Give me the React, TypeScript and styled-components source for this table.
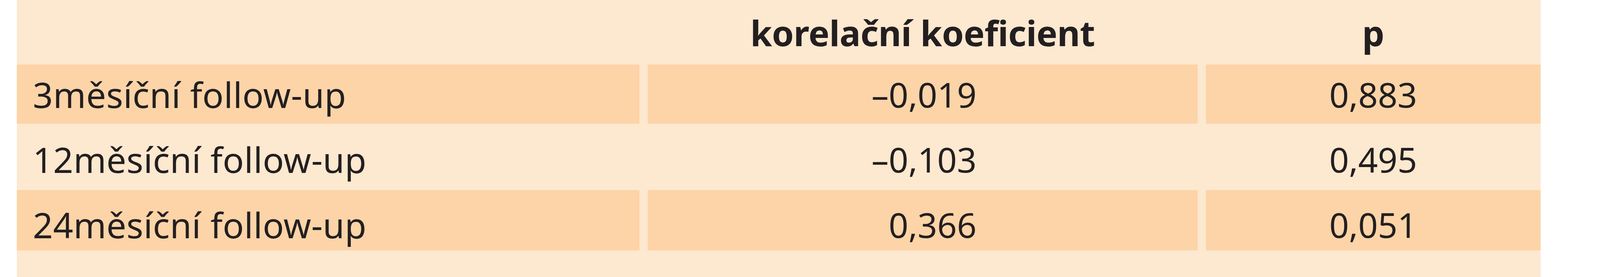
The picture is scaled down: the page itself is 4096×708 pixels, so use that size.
import React from 'react'
import styled, { createGlobalStyle } from 'styled-components'

const LIGHT = '#fde8d0'
const DARK = '#fcd4a7'
const INK = '#231f20'

const GlobalStyle = createGlobalStyle`
    html, body {
        margin: 0;
        padding: 0;
        background: #ffffff;
    }
    body {
        font-family: "Noto Sans", "Open Sans", "Liberation Sans", sans-serif;
        color: ${INK};
    }
`;

const Page = styled.div`
    display: flex;
    width: 4096px;
    height: 708px;
    padding-left: 43px;
    box-sizing: border-box;
    overflow: hidden;
`;

const Table = styled.div`
    display: flex;
    flex-direction: column;
    width: 3901px;
    height: 100%;
`;

const Row = styled.div<{ $height: number; $dark?: boolean; $shift?: number }>`
    display: grid;
    grid-template-columns: 1594px 1408px 857px;
    column-gap: 21px;
    height: ${props => props.$height}px;
    flex: ${props => (props.$height ? 'none' : '1')};
    background: ${LIGHT};
    & > * {
        background: ${props => (props.$dark ? DARK : LIGHT)};
        padding-top: ${props => props.$shift ?? 0}px;
        box-sizing: border-box;
    }
`;

const HeadCell = styled.div`
    display: flex;
    align-items: center;
    justify-content: center;
    font-weight: 700;
    font-size: 90px;
    letter-spacing: -0.5px;
`;

const LabelCell = styled.div`
    display: flex;
    align-items: center;
    padding-left: 41px;
    font-size: 90px;
    letter-spacing: 0.5px;
`;

const NumCell = styled.div`
    display: flex;
    align-items: center;
    justify-content: center;
    font-size: 88px;
`;

const Num = styled.span<{ $width: number }>`
    display: inline-block;
    width: ${props => props.$width}px;
    text-align: right;
`;

const rows = [
    { label: '3měsíční follow-up', r: '–0,019', p: '0,883', height: 151, shift: 0, dark: true },
    { label: '12měsíční follow-up', r: '–0,103', p: '0,495', height: 170, shift: 12, dark: false },
    { label: '24měsíční follow-up', r: '0,366', p: '0,051', height: 154, shift: 22, dark: true },
]

const App = () => {
    return (
        <>
            <GlobalStyle />
            <Page>
                <Table>
                    <Row $height={165}>
                        <HeadCell />
                        <HeadCell>korelační koeficient</HeadCell>
                        <HeadCell>p</HeadCell>
                    </Row>
                    {rows.map(row => (
                        <Row key={row.label} $height={row.height} $dark={row.dark} $shift={row.shift}>
                            <LabelCell>{row.label}</LabelCell>
                            <NumCell>
                                <Num $width={276}>{row.r}</Num>
                            </NumCell>
                            <NumCell>{row.p}</NumCell>
                        </Row>
                    ))}
                    <Row $height={0} />
                </Table>
            </Page>
        </>
    )
}

export default App
